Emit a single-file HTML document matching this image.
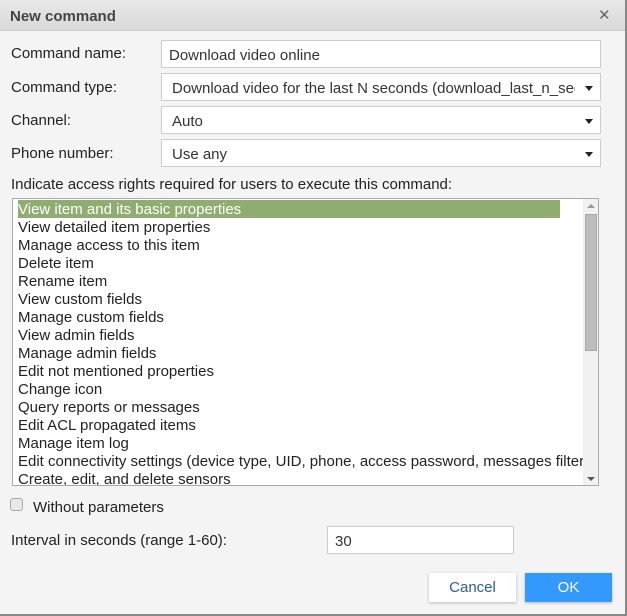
<!DOCTYPE html>
<html><head><style>
*{box-sizing:border-box;margin:0;padding:0}
body{width:627px;height:616px;background:#f4f4f4;font-family:"Liberation Sans",sans-serif;font-size:15px;color:#222;position:relative;overflow:hidden}
.hdr{position:absolute;left:0;top:0;width:627px;height:31px;background:linear-gradient(#e8e8e8,#d9d9d9);border-bottom:1px solid #ccc}
.hdr b{position:absolute;left:10px;top:8px;font-size:15px;color:#444}
.x{position:absolute;left:598px;top:6px;font-size:15px;color:#666}
.rb{position:absolute;right:0;top:0;width:2px;height:616px;background:#888}
.bb{position:absolute;left:0;top:614px;width:627px;height:2px;background:#888}
.lbl{position:absolute;left:11px;font-size:15px}
.inp{position:absolute;left:161px;width:440px;height:28px;background:#fff;border:1px solid #ccc;padding:6px 10px;font-size:15px;color:#333;white-space:nowrap;overflow:hidden}
.inp.s .t{position:absolute;left:10px;top:6px;width:403px;overflow:hidden}
.arr{position:absolute;right:7px;top:12px;width:0;height:0;border-left:4px solid transparent;border-right:4px solid transparent;border-top:5px solid #222}
.list{position:absolute;left:12px;top:198px;width:587px;height:288px;background:#fff;border:1px solid #aaa;overflow:hidden}
.clip{position:absolute;left:0;top:0;width:570px;height:288px;overflow:hidden}
.clip div{position:absolute;left:5px;height:18px;line-height:19px;font-size:15px;white-space:nowrap;color:#222}
.sel{background:#8fad70;color:#fff!important;width:542px}
.sb{position:absolute;left:570px;top:0;width:16px;height:288px;background:#f1f1f1}
.th{position:absolute;left:2px;top:15px;width:12px;height:137px;background:#bdbdbd;border:1px solid #a8a8a8}
.btn{position:absolute;top:573px;height:29px;font-size:15px;text-align:center;line-height:29px;box-shadow:0 1px 3px rgba(0,0,0,.25)}
</style></head><body>
<div class="hdr"><b>New command</b><span class="x">✕</span></div>
<div class="lbl" style="top:45px">Command name:</div>
<div class="inp" style="top:40px;padding-left:7px">Download video online</div>
<div class="lbl" style="top:79px">Command type:</div>
<div class="inp s" style="top:73px"><span class="t">Download video for the last N seconds (download_last_n_seconds)</span><span class="arr"></span></div>
<div class="lbl" style="top:112px">Channel:</div>
<div class="inp s" style="top:106px"><span class="t">Auto</span><span class="arr"></span></div>
<div class="lbl" style="top:145px">Phone number:</div>
<div class="inp s" style="top:139px"><span class="t">Use any</span><span class="arr"></span></div>
<div class="lbl" style="top:176px">Indicate access rights required for users to execute this command:</div>
<div class="list"><div class="clip">
<div class="sel" style="top:1px">View item and its basic properties</div>
<div style="top:19px">View detailed item properties</div>
<div style="top:37px">Manage access to this item</div>
<div style="top:55px">Delete item</div>
<div style="top:73px">Rename item</div>
<div style="top:91px">View custom fields</div>
<div style="top:109px">Manage custom fields</div>
<div style="top:127px">View admin fields</div>
<div style="top:145px">Manage admin fields</div>
<div style="top:163px">Edit not mentioned properties</div>
<div style="top:181px">Change icon</div>
<div style="top:199px">Query reports or messages</div>
<div style="top:217px">Edit ACL propagated items</div>
<div style="top:235px">Manage item log</div>
<div style="top:253px">Edit connectivity settings (device type, UID, phone, access password, messages filter)</div>
<div style="top:271px">Create, edit, and delete sensors</div>
</div>
<div class="sb"><span style="position:absolute;left:4px;top:5px;border-left:4px solid transparent;border-right:4px solid transparent;border-bottom:4px solid #999"></span><span class="th"></span><span style="position:absolute;left:4px;top:278px;border-left:4px solid transparent;border-right:4px solid transparent;border-top:4px solid #555"></span></div>
</div>
<div style="position:absolute;left:10px;top:498px;width:13px;height:13px;border:1px solid #aaa;border-radius:3px;background:#e8e8e8"></div>
<div class="lbl" style="top:499px;left:33px">Without parameters</div>
<div class="lbl" style="top:532px">Interval in seconds (range 1-60):</div>
<div class="inp" style="top:526px;left:327px;width:187px;padding-left:7px">30</div>
<div class="btn" style="left:429px;width:87px;background:#fff;color:#2a5d9f">Cancel</div>
<div class="btn" style="left:525px;width:87px;background:#3399ff;color:#fff">OK</div>
<div class="rb"></div><div class="bb"></div>
</body></html>
